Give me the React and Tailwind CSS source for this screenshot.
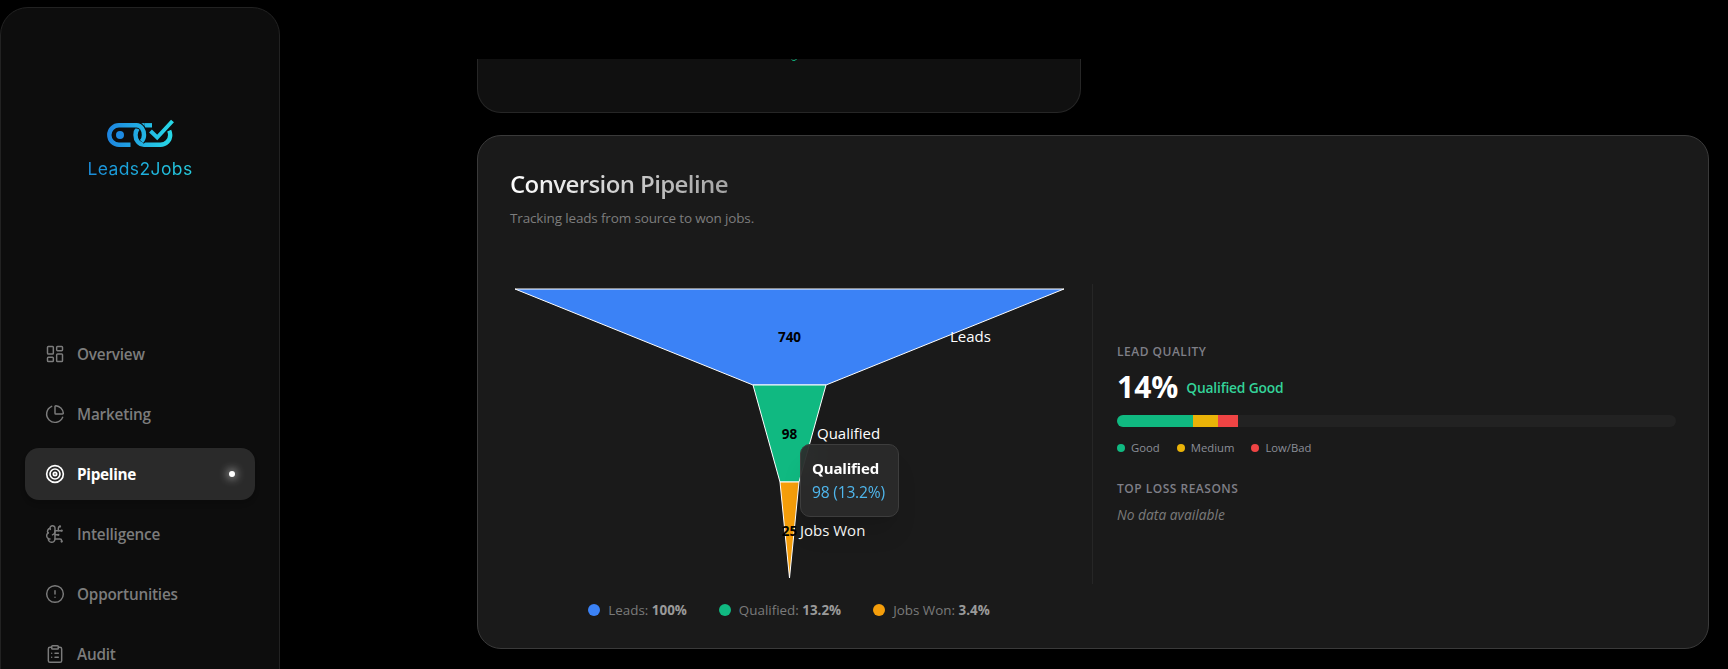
import React from "react";
import { LayoutDashboard, ChartPie, Target, BrainCircuit, CircleAlert, ClipboardList } from "lucide-react";

const nav = [
  { label: "Overview", Icon: LayoutDashboard },
  { label: "Marketing", Icon: ChartPie },
  { label: "Pipeline", Icon: Target, active: true },
  { label: "Intelligence", Icon: BrainCircuit },
  { label: "Opportunities", Icon: CircleAlert },
  { label: "Audit", Icon: ClipboardList },
];

function Logo() {
  const left = "M130.500 143.700H119a9.700 9.700 0 0 1 0-19.400H136.500c4.700 0 7.500 4.500 7.500 9.700c0 3-1 5-2.500 6.500";
  return (
    <svg width="70" height="32" viewBox="105 117 70 32" fill="none">
      <defs>
        <linearGradient id="lg" x1="107" x2="173" y1="0" y2="0" gradientUnits="userSpaceOnUse">
          <stop offset="0" stopColor="#1d84e0" />
          <stop offset="1" stopColor="#27d9e6" />
        </linearGradient>
      </defs>
      <path d="M144.500 124.300H152" stroke="url(#lg)" strokeWidth="4.400" />
      <path d="M144.500 124.300c-5.500 0-9 4.700-9 9.700c0 5.500 3.500 9.700 8.500 9.700H160.500a9.700 9.700 0 0 0 9.700-9.700c0-1.500-.4-3-1-4.300" stroke="url(#lg)" strokeWidth="4.400" />
      <path d={left} stroke="#0d0d0d" strokeWidth="6.500" />
      <path d={left} stroke="url(#lg)" strokeWidth="4.400" />
      <circle cx="120" cy="134" r="4" fill="#1d8ae2" />
      <path d="M150.500 130l6.700 6.500L172.500 120" stroke="url(#lg)" strokeWidth="4" />
    </svg>
  );
}

function Sidebar() {
  return (
    <aside className="mt-[7px] h-[720px] w-[280px] shrink-0 rounded-t-[28px] border border-[#222222] bg-[#0d0d0d] px-[24px]">
      <div className="flex flex-col items-center pt-[110px]">
        <Logo />
        <div className="mt-[7px] bg-gradient-to-r from-[#1b8ad8] to-[#27cfe0] bg-clip-text font-['Inter',sans-serif] text-[17.500px] leading-[24px] tracking-[0.4px] text-transparent">
          Leads2Jobs
        </div>
      </div>
      <nav className="mt-[147px] flex flex-col gap-2">
        {nav.map(({ label, Icon, active }) => (
          <div
            key={label}
            className={
              active
                ? "flex h-[52px] items-center gap-3 rounded-[14px] bg-[#2a2a2a] px-[20px] text-white shadow-md"
                : "flex h-[52px] items-center gap-3 rounded-[14px] px-[20px] text-[#7c7c7c]"
            }
          >
            <Icon size={20} strokeWidth={active ? 2 : 1.75} />
            <span className={active ? "text-[15.300px] font-bold tracking-[-0.3px]" : "text-[15.300px] font-semibold tracking-[-0.2px]"}>{label}</span>
            {active && <span className="ml-auto h-[6px] w-[6px] rounded-full bg-white shadow-[0_0_8px_2px_rgba(255,255,255,0.5)]" />}
          </div>
        ))}
      </nav>
    </aside>
  );
}

function Funnel() {
  const o = (x, y) => `${x - 510},${y - 284}`;
  return (
    <svg width="582" height="300" className="block">
      <polygon points={`${o(515, 289)} ${o(1064, 289)} ${o(826, 385)} ${o(753, 385)}`} fill="#3b82f6" stroke="#fff" strokeWidth="1" />
      <polygon points={`${o(753, 385)} ${o(826, 385)} ${o(799, 482)} ${o(780, 482)}`} fill="#10b981" stroke="#fff" strokeWidth="1" />
      <polygon points={`${o(780, 482)} ${o(799, 482)} ${o(789.5, 578)}`} fill="#f59e0b" stroke="#fff" strokeWidth="1" />
      <g className="font-['Open_Sans',sans-serif]" fontSize="15">
        <text x="279.500" y="58" textAnchor="middle" fontWeight="700" fill="#000" fontSize="13.500">740</text>
        <text x="440" y="58" fill="#fff">Leads</text>
        <text x="279.500" y="155" textAnchor="middle" fontWeight="700" fill="#000" fontSize="13.500">98</text>
        <text x="307" y="155" fill="#fff">Qualified</text>
        <text x="279.500" y="252" textAnchor="middle" fontWeight="700" fill="#000" fontSize="13.500">25</text>
        <text x="290" y="252" fill="#fff">Jobs Won</text>
      </g>
    </svg>
  );
}

function Dot({ color, label }) {
  return (
    <div className="flex items-center gap-[6px]">
      <span className={`h-2 w-2 rounded-full ${color}`} />
      <span className="text-[11.300px] leading-4 text-[#8b8f98]">{label}</span>
    </div>
  );
}

function Legend({ color, label, value }) {
  return (
    <div className="flex items-center gap-2">
      <span className={`h-3 w-3 rounded-full ${color}`} />
      <span className="text-[13.400px] leading-4 text-[#7a7a7a]">
        {label}: <b className="font-bold text-[#9a9a9a]">{value}</b>
      </span>
    </div>
  );
}

export default function App() {
  return (
    <div className="flex h-[669px] w-full overflow-hidden bg-black font-['Open_Sans',sans-serif]">
      <Sidebar />
      <main className="flex-1 pl-[197px] pr-[19px]">
        <div className="h-[59px] bg-black" />
        <div className="h-[54px] w-[604px] overflow-hidden rounded-b-[24px] border-x border-b border-[#262626] bg-[#101010]">
          <svg width="6" height="3" className="ml-[313px] block" viewBox="0 0 6 3">
            <path d="M0.500 0.300c.8 1.700 4 1.700 5-.3" stroke="#10b981" strokeWidth="1" fill="none" />
          </svg>
        </div>
        <section className="mt-[22px] rounded-[24px] border border-[#3a3a3a] bg-[#1a1a1a] px-[32px] pb-[30px] pt-[32px]">
          <h2 className="w-fit bg-gradient-to-r from-white to-[#a3a3a3] bg-clip-text text-[24px] font-semibold leading-8 tracking-[-0.6px] text-transparent">
            Conversion Pipeline
          </h2>
          <p className="mt-2 text-[13.500px] leading-5 tracking-[-0.15px] text-[#7d7d7d]">Tracking leads from source to won jobs.</p>
          <div className="mt-[56px] grid grid-cols-[582px_1fr]">
            <div className="relative">
              <Funnel />
              <div className="mt-[18px] flex w-[558px] justify-center gap-[32px]">
                <Legend color="bg-[#3b82f6]" label="Leads" value="100%" />
                <Legend color="bg-[#10b981]" label="Qualified" value="13.2%" />
                <Legend color="bg-[#f59e0b]" label="Jobs Won" value="3.4%" />
              </div>
              <div className="absolute left-[290px] top-[160px] flex h-[73px] w-[99px] flex-col justify-center rounded-[10px] border border-[#3d3d3d] bg-[#2b2b2b]/90 pb-[2px] pl-[11px] shadow-xl backdrop-blur-md">
                <div className="text-[15px] font-bold leading-[24px] tracking-[-0.2px] text-white">Qualified</div>
                <div className="text-[15.600px] leading-[24px] tracking-[-0.2px] text-[#4fb6ec]">98 (13.2%)</div>
              </div>
            </div>
            <div className="flex h-[300px] flex-col border-l border-[#262626] pl-[24px] pt-[60px]">
              <div className="text-[12px] font-semibold uppercase leading-4 tracking-[0.5px] text-[#7f7f87]">Lead Quality</div>
              <div className="mt-[7px] flex items-center gap-2">
                <span className="text-[30px] font-bold leading-[40px] text-white">14%</span>
                <span className="mt-[3px] text-[13.800px] font-semibold tracking-[-0.2px] text-[#34d399]">Qualified Good</span>
              </div>
              <div className="mt-[8px] flex h-3 shrink-0 overflow-hidden rounded-full bg-[#222222]">
                <div className="w-[76px] bg-[#10b981]" />
                <div className="w-[25px] bg-[#eab308]" />
                <div className="w-[20px] bg-[#ef4444]" />
              </div>
              <div className="mt-[13px] flex gap-[17px]">
                <Dot color="bg-[#10b981]" label="Good" />
                <Dot color="bg-[#eab308]" label="Medium" />
                <Dot color="bg-[#ef4444]" label="Low/Bad" />
              </div>
              <div className="mt-[25px] text-[12px] font-semibold uppercase leading-4 tracking-[0.5px] text-[#7f7f87]">Top Loss Reasons</div>
              <div className="mt-[8px] text-[13.800px] italic leading-5 text-[#7a7a7a]">No data available</div>
            </div>
          </div>
        </section>
      </main>
    </div>
  );
}
